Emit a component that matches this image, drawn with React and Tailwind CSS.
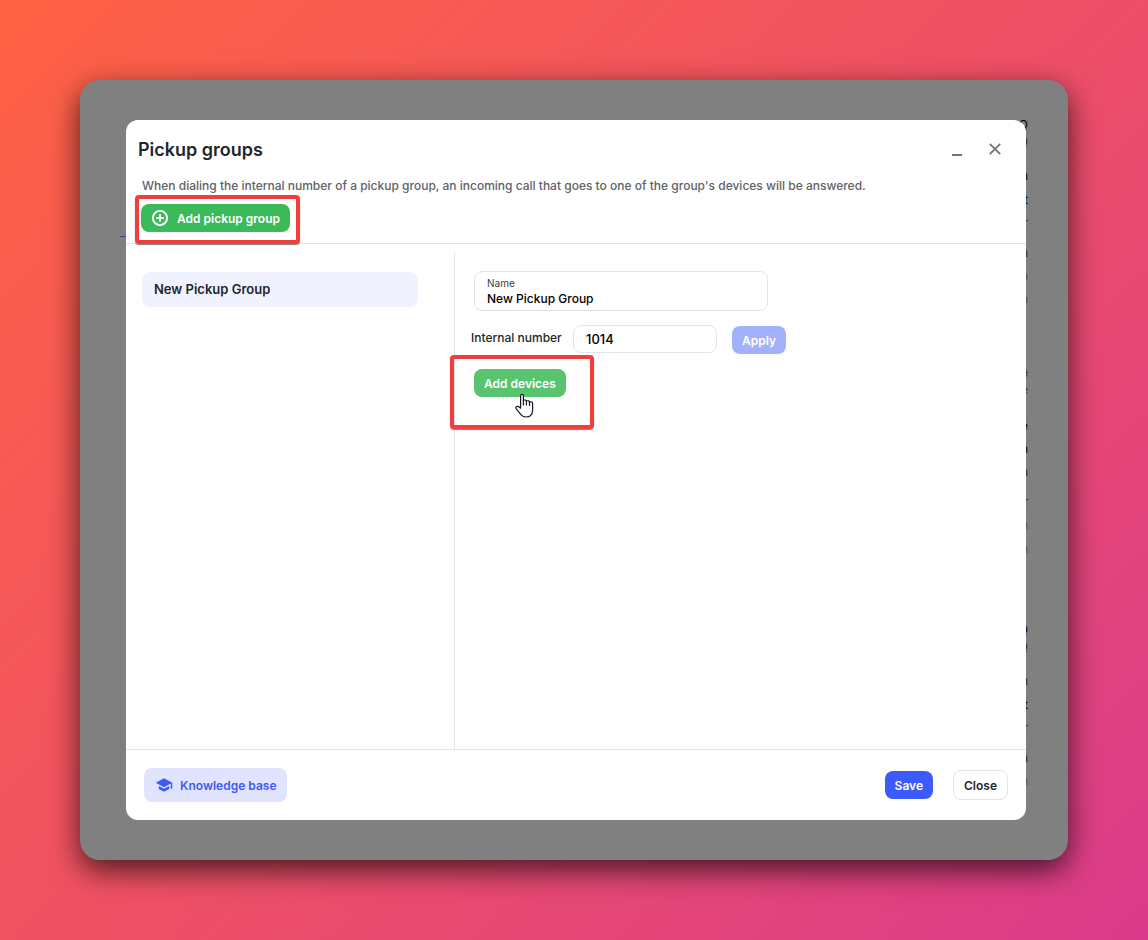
import React from "react";
import { MdSchool } from "react-icons/md";

const edgeLetters = [
  { char: "Q", top: "top-[37px]", tone: "text-black" },
  { char: "Q", top: "top-[54px]", tone: "text-neutral-800" },
  { char: "n", top: "top-[88px]", tone: "text-black" },
  { char: "t", top: "top-[112px]", tone: "text-black" },
  { char: "r", top: "top-[135px]", tone: "text-neutral-800" },
  { char: "n", top: "top-[165px]", tone: "text-neutral-800" },
  { char: "n", top: "top-[188px]", tone: "text-neutral-600" },
  { char: "n", top: "top-[211px]", tone: "text-neutral-600" },
  { char: "e", top: "top-[285px]", tone: "text-neutral-800" },
  { char: "e", top: "top-[302px]", tone: "text-neutral-700" },
  { char: "e", top: "top-[338px]", tone: "text-black" },
  { char: "n", top: "top-[361px]", tone: "text-black" },
  { char: "n", top: "top-[384px]", tone: "text-neutral-800" },
  { char: "r", top: "top-[414px]", tone: "text-neutral-800" },
  { char: "n", top: "top-[437px]", tone: "text-neutral-600" },
  { char: "n", top: "top-[461px]", tone: "text-neutral-600" },
  { char: "Q", top: "top-[542px]", tone: "text-black" },
  { char: "Q", top: "top-[559px]", tone: "text-neutral-800" },
  { char: "n", top: "top-[593px]", tone: "text-neutral-800" },
  { char: "t", top: "top-[617px]", tone: "text-black" },
  { char: "r", top: "top-[640px]", tone: "text-neutral-800" },
  { char: "n", top: "top-[670px]", tone: "text-neutral-800" },
  { char: "n", top: "top-[693px]", tone: "text-neutral-600" },
];

function PageBehind() {
  return (
    <div aria-hidden="true" className="pointer-events-none absolute inset-0">
      <span className="absolute top-[156px] left-10 h-px w-3 bg-[#3c4480]" />
      {edgeLetters.map((l) => (
        <span key={l.top} className={`absolute right-10 text-xs leading-4 ${l.top} ${l.tone}`}>
          {l.char}
        </span>
      ))}
    </div>
  );
}

function HandCursor() {
  return (
    <svg
      aria-hidden="true"
      viewBox="0 0 19 25"
      className="pointer-events-none absolute top-6 left-[41px] h-[25px] w-[19px]"
      fill="white"
      stroke="#17172b"
      strokeWidth="1.2"
      strokeLinejoin="round"
      strokeLinecap="round"
    >
      <path d="M5.6 15V3Q5.6 1.4 7 1.4T8.4 3V7.2Q10.9 6.4 11.4 8Q14 7.2 14.5 9Q17.6 8.3 17.6 10.8V17.5Q17.6 20.8 15.4 22.8Q13.7 24 11.2 24Q8 24 6.2 21.8L1.1 15.6Q.4 14.5 1.3 13.8Q2.5 13 3.8 13.8L5.6 15.2" />
      <path d="M8.4 7.2V12M11.4 8V12M14.5 9V12.5" fill="none" />
    </svg>
  );
}

export default function App() {
  return (
    <main className="flex min-h-screen bg-linear-135 from-[#ff6242] via-[#ef5064] to-[#da3a8a] p-20 font-['Inter',sans-serif] text-xs text-[#24262b]">
      <div className="relative flex grow rounded-[20px] bg-[#808080] py-10 pr-[42px] pl-[46px] shadow-[0_10px_30px_rgba(0,0,0,0.7)]">
        <PageBehind />
        <section role="dialog" aria-labelledby="title" className="relative flex grow flex-col rounded-xl bg-white">
          <header className="border-b border-[#e4e4e7] pb-[11px]">
            <div className="flex items-start justify-between pt-[18px] pr-5 pl-3">
              <h1 id="title" className="text-lg leading-6 font-semibold">Pickup groups</h1>
              <div className="flex gap-4 text-[#707479]">
                <button type="button" aria-label="Minimize" className="flex size-[22px] items-center justify-center">
                  <svg viewBox="0 0 22 22" className="size-[22px]" fill="currentColor">
                    <rect x="6" y="16" width="10" height="2" />
                  </svg>
                </button>
                <button type="button" aria-label="Close dialog" className="flex size-[22px] items-center justify-center">
                  <svg viewBox="0 0 22 22" className="size-[22px]" fill="none" stroke="currentColor" strokeWidth="1.8">
                    <path d="M5.8 5.8L16.2 16.2M16.2 5.8L5.8 16.2" />
                  </svg>
                </button>
              </div>
            </div>
            <div className="px-4 pt-4">
              <p className="text-xs leading-4 font-medium text-[#606266]">
                When dialing the internal number of a pickup group, an incoming call that goes to one of the group's devices will be answered.
              </p>
            </div>
            <div className="flex px-[15px] pt-2.5">
              <div className="relative">
                <button type="button" className="flex h-7 items-center gap-2 rounded-lg bg-[#3aba58] px-2.5 font-semibold text-white">
                  <svg viewBox="0 0 18 18" className="size-[18px]" fill="none" stroke="currentColor" strokeWidth="1.9">
                    <circle cx="9" cy="9" r="7.1" />
                    <path d="M9 5.2V12.8M5.2 9H12.8" />
                  </svg>
                  <span className="pt-0.5">Add pickup group</span>
                </button>
                <span aria-hidden="true" className="pointer-events-none absolute -top-[9px] -right-2.5 -bottom-3 -left-1.5 rounded-sm border-4 border-[#f23d3d] shadow-[0_1px_1px_rgba(0,0,0,0.5)]" />
              </div>
            </div>
          </header>

          <div className="flex grow pt-2">
            <nav aria-label="Groups" className="w-[328px] px-4 pt-5">
              <button type="button" className="h-[35px] w-[276px] rounded-lg bg-[#f0f2ff] px-3 text-left text-[13px] font-semibold">
                New Pickup Group
              </button>
            </nav>
            <form className="grow border-l border-[#e4e4e7] pt-[19px] pl-4">
              <div className="ml-[3px] flex h-10 w-[294px] flex-col rounded-lg border border-[#e4e4e7] px-3 pt-[3px]">
                <label htmlFor="name" className="text-[10px] leading-4 text-[#3a3c40]">Name</label>
                <input id="name" defaultValue="New Pickup Group" className="h-4 text-xs font-medium text-black outline-none" />
              </div>
              <div className="flex items-start pt-3.5">
                <label htmlFor="number" className="w-[102px] text-xs leading-[26px] font-medium">Internal number</label>
                <input id="number" defaultValue="1014" className="h-7 w-36 rounded-lg border border-[#e4e4e7] px-3 text-[13px] font-medium text-black outline-none" />
                <button type="button" className="mt-px ml-[15px] h-7 rounded-lg bg-[#a3b0fb] px-2.5 pt-0.5 font-semibold text-white">Apply</button>
              </div>
              <div className="ml-[3px] flex pt-[15px]">
                <div className="relative">
                  <button type="button" className="h-7 rounded-lg bg-[#59c470] px-2.5 pt-0.5 font-semibold text-white">Add devices</button>
                  <HandCursor />
                  <span aria-hidden="true" className="pointer-events-none absolute -top-3.5 -right-7 -bottom-8 -left-6 rounded-sm border-4 border-[#f23d3d] shadow-[0_1px_1px_rgba(0,0,0,0.5)]" />
                </div>
              </div>
            </form>
          </div>

          <footer className="flex items-center justify-between border-t border-[#e4e4e7] p-[18px]">
            <a href="#knowledge-base" className="flex h-[34px] items-center gap-[7px] rounded-lg bg-[#e0e4ff] pr-2.5 pl-[11px] font-semibold text-[#3c5af5]">
              <MdSchool className="size-[18px]" />
              <span className="pt-0.5">Knowledge base</span>
            </a>
            <div className="flex items-center gap-5">
              <button type="button" className="h-7 rounded-lg bg-[#3d5afa] px-2.5 pt-0.5 font-semibold text-white">Save</button>
              <button type="button" className="h-[30px] rounded-lg border border-[#e4e4e7] bg-white px-2.5 pt-0.5 font-semibold">Close</button>
            </div>
          </footer>
        </section>
      </div>
    </main>
  );
}
